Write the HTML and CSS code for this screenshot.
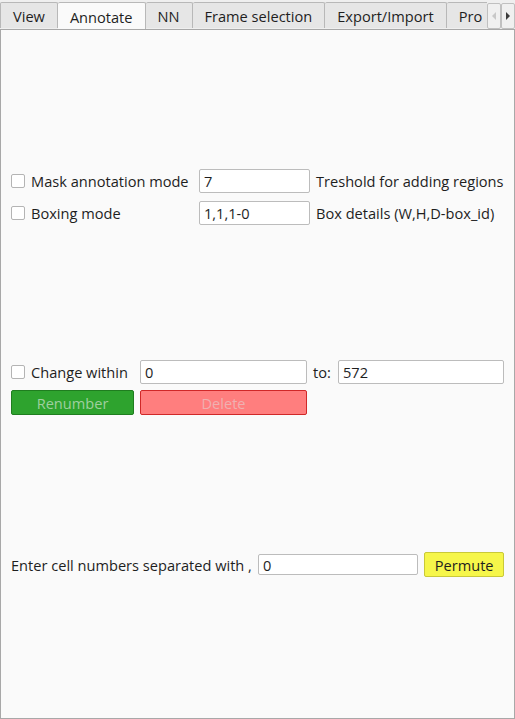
FILE: index.html
```html
<!DOCTYPE html>
<html>
<head>
<meta charset="utf-8">
<link rel="stylesheet" href="styles.css">
</head>
<body>
<div class="window">
  <div class="tabbar">
    <div class="tabs">
      <div class="tab first">View</div>
      <div class="tab active">Annotate</div>
      <div class="tab">NN</div>
      <div class="tab">Frame selection</div>
      <div class="tab">Export/Import</div>
      <div class="tab cut">Pro</div>
    </div>
    <div class="scroller">
      <div class="sbtn"><svg width="5" height="8" viewBox="0 0 5 8"><path d="M4 0 L0 4 L4 8 Z" fill="#c8c8c8"/></svg></div>
      <div class="sbtn"><svg width="5" height="8" viewBox="0 0 5 8"><path d="M0 0 L4 4 L0 8 Z" fill="#3c3c3c"/></svg></div>
    </div>
  </div>
  <div class="pane">
    <div class="grid1">
      <label class="check"><span class="box"></span>Mask annotation mode</label>
      <div class="input">7</div>
      <span class="lbl">Treshold for adding regions</span>
      <label class="check"><span class="box"></span>Boxing mode</label>
      <div class="input">1,1,1-0</div>
      <span class="lbl">Box details (W,H,D-box_id)</span>
    </div>
    <div class="grid2">
      <label class="check"><span class="box"></span>Change within</label>
      <div class="input">0</div>
      <span class="lbl">to:</span>
      <div class="input">572</div>
      <div class="btn green">Renumber</div>
      <div class="btn red">Delete</div>
    </div>
    <div class="row5">
      <span class="lbl">Enter cell numbers separated with ,</span>
      <div class="input small">0</div>
      <div class="btn yellow">Permute</div>
    </div>
  </div>
</div>
</body>
</html>
```
FILE: styles.css
```css
* { box-sizing: border-box; }
html, body { margin: 0; padding: 0; }
body {
  background: #efefef;
  font-family: "Open Sans", "Noto Sans", sans-serif;
  font-size: 14.6px;
  color: #1e1e1e;
}
.window { width: 515px; height: 719px; display: flex; flex-direction: column; }
.tabbar { display: flex; height: 29px; align-items: flex-end; position: relative; }
.tabs { display: flex; width: 487px; overflow: hidden; align-items: flex-end; }
.tab {
  height: 26px;
  padding: 0 12px;
  border: 1px solid #b8b8b8;
  border-bottom: none;
  border-left: none;
  border-radius: 2px 2px 0 0;
  background: #e6e6e6;
  display: flex;
  align-items: center;
  white-space: nowrap;
  flex: none;
  margin-bottom: 1px;
}
.tab.first { border-left: 1px solid #b8b8b8; }
.tab.active {
  background: #fafafa;
  height: 28px;
  margin-bottom: -1px;
  position: relative;
  z-index: 1;
}
.tab.cut { padding-right: 20px; }
.scroller { display: flex; align-self: flex-start; margin-top: 3px; }
.sbtn {
  width: 14px; height: 26px;
  border: 1px solid #c0c0c0;
  border-radius: 2px;
  background: #f0f0f0;
  display: flex; align-items: center; justify-content: center;
}
.pane {
  flex: 1;
  background: #fafafa;
  border: 1px solid #a8a8a8;
  padding: 0 10px;
  display: flex;
  flex-direction: column;
}
.check { display: flex; align-items: center; gap: 6px; white-space: nowrap; }
.box {
  width: 14px; height: 14px;
  border: 1px solid #b4b4b4;
  border-radius: 2px;
  background: #fff;
  flex: none;
}
.input {
  height: 24px;
  border: 1px solid #bcbcbc;
  border-radius: 2px;
  background: #fff;
  padding: 0 4px;
  display: flex; align-items: center;
  color: #1e1e1e;
}
.lbl { white-space: nowrap; }
.grid1 {
  margin-top: 139px;
  display: grid;
  grid-template-columns: 182px 111px auto;
  column-gap: 6px;
  row-gap: 8px;
  align-items: center;
}
.grid2 {
  margin-top: 135px;
  display: grid;
  grid-template-columns: 123px 167px 19px 166px;
  column-gap: 6px;
  row-gap: 6px;
  align-items: center;
}
.btn {
  height: 25px;
  border-radius: 2px;
  display: flex; align-items: center; justify-content: center;
}
.green { background: #2ea32e; border: 1px solid #1f7d1f; color: #9fcf9f; grid-column: 1; }
.red { background: #ff7e7e; border: 1px solid #d02828; color: #efb0b0; grid-column: 2; }
.row5 {
  margin-top: 137px;
  display: flex;
  align-items: center;
}
.row5 .lbl { margin-right: 6px; }
.input.small { height: 21px; width: 161px; margin-right: 6px; }
.yellow { background: #f6f64a; border: 1px solid #c9c938; color: #1e1e1e; width: 80px; height: 25px; }
```
